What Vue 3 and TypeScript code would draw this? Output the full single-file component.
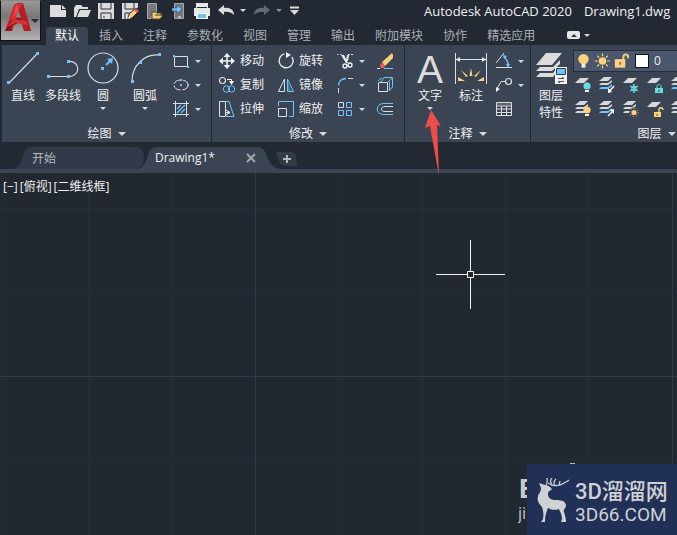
<script setup lang="ts">
interface Tool { id: string; label: string; caret?: boolean }

const para = (y: number, fill = '#d6d8db') => `<path d="M4 ${y + 5}L9 ${y}H18L13 ${y + 5}Z" fill="${fill}"/>`
const stack = (last = '#d6d8db') =>
  `<path d="M4 8L9 4H17L13 8Z" fill="#d6d8db"/><path d="M4 12L6 10H13L17 7V9L13 12Z" fill="#d6d8db"/><path d="M4 16L6 14H13L17 11V13L13 16Z" fill="${last}"/>`
const bulb = (color: string) => `<circle cx="16" cy="13" r="3.6" fill="${color}"/><path d="M14 17h4v2h-4z" fill="#eef0f2"/>`

const icons: Record<string, string> = {
  new: '<path d="M4 5H15V10H20V17H4Z" fill="#dcdcdc"/><path d="M16 5L20 9H16Z" fill="#dcdcdc"/>',
  open: '<path d="M4 17V8L6 5H11L13 7H18V9H9L6 17Z" fill="#dcdcdc"/><path d="M7 17L10 10H21L18 17Z" fill="#dcdcdc"/>',
  save: '<path d="M4 3H20V19H4Z" fill="#dcdcdc"/><path d="M7 3V9H17V3M7 19V13H17V19" fill="none" stroke="#29303a"/><path d="M10 16v2" stroke="#29303a"/>',
  saveas: '<path d="M4 3H20V7L10 19H4Z" fill="#dcdcdc"/><path d="M7 3V9H16V3M7 19V13H13" fill="none" stroke="#29303a"/><path d="M10 19L11 14L18 8L21 11L14 18Z" fill="#f8cc72" stroke="#252c36"/><path d="M18 8L21 11L19 13L16 10Z" fill="#e05454"/><path d="M10 19l1-3 2 2z" fill="#fff"/>',
  mobileOpen: '<path d="M5.500 3.500H14.500V18.500H5.500Z" fill="#777" stroke="#a8a8a8"/><path d="M9 17h3" stroke="#fff"/><path d="M10 19V12H14L15 13H19V15L21 15L18 19Z" fill="#f6ca70" stroke="#4b4639"/><path d="M13 15H20" stroke="#3e3a32"/>',
  mobileSave: '<path d="M8.500 3.500H17.500V18.500H8.500Z" fill="#777" stroke="#a8a8a8"/><path d="M12 17h3" stroke="#fff"/><path d="M6 8H11V5L16 9L11 14V11H6Z" fill="#6fc3ff" stroke="#28476a" stroke-width=".6"/>',
  print: '<path d="M7 3H17V7H7ZM4 8H20V16H17V13H7V16H4Z" fill="#e5e7e9"/><path d="M6 3H18V8H6Z" fill="#e5e7e9"/><path d="M7 7.500H17" stroke="#2b3139"/><path d="M6 13H18V19H6Z" fill="#f4f4f4"/><path d="M8 14H16V18H8Z" fill="#72c1f5"/>',
  undo: '<path d="M4 10L10 5V8C16 7 20 10 20 15C17 12 14 11.500 10 12V15Z" fill="#dcdcdc"/>',
  redo: '<path d="M20 10L14 5V8C8 7 4 10 4 15C7 12 10 11.500 14 12V15Z" fill="#656b74"/>',
  customise: '<path d="M8 7.500H17" stroke="#dcdcdc" stroke-width="2"/><path d="M8 10H17L12.500 15Z" fill="#dcdcdc"/>',
  line: '<path d="M2 31L30 2" stroke="#d9dce0" stroke-width="1.2"/><path d="M0 29h3v3H0zM29 0h3v3h-3z" fill="#6fc3ff"/>',
  polyline: '<path d="M2 24.500H21M21 9.500C34 8 34 25 21 24.500" stroke="#d9dce0" stroke-width="1.2" fill="none"/><path d="M0 23h3v3H0zM20 23h3v3h-3zM20 8h3v3h-3z" fill="#6fc3ff"/>',
  circle: '<circle cx="16" cy="16" r="15" stroke="#d9dce0" stroke-width="1.2" fill="none"/><path d="M14 15h3v3h-3z" fill="#6fc3ff"/><path d="M19 13L24 8" stroke="#6fc3ff" stroke-width="2"/><path d="M20 7L26 6L25 12Z" fill="#6fc3ff"/>',
  arc: '<path d="M3 29C3 14 15 2 29 3" stroke="#d9dce0" stroke-width="1.2" fill="none"/><path d="M2 28h3v3H2zM10 9h3v3h-3zM29 1h3v3h-3z" fill="#6fc3ff"/>',
  rect: '<path d="M5.500 7.500H18.500V17.500H5.500Z" stroke="#dcdfe2" fill="none"/><path d="M4 6h2v2H4zM18 17h2v2h-2z" fill="#6fc3ff"/>',
  ellipse: '<ellipse cx="12" cy="12" rx="7" ry="5" stroke="#dcdfe2" fill="none" stroke-dasharray="8 2"/><path d="M11 6h2v2h-2zM11 11h2v2h-2zM18 11h2v2h-2z" fill="#6fc3ff"/>',
  hatch: '<path d="M6.500 4V20M17.500 4V20M4 6.500H20M4 17.500H20" stroke="#dcdfe2"/><path d="M8 12L12 8M8 16L16 8M12 16L16 12" stroke="#6fc3ff" stroke-width="1.2"/>',
  move: '<path d="M6 12H18M12 6V18" stroke="#eef0f2" stroke-width="1.600"/><path d="M4 12L8 8.500V15.500ZM20 12L16 8.500V15.500ZM12 4L8.500 8H15.500ZM12 20L8.500 16H15.500Z" fill="#eef0f2"/>',
  rotate: '<path d="M16 6A7 7 0 1 1 8 6" stroke="#e3e5e8" stroke-width="1.400" fill="none" transform="rotate(22 12 12)"/><path d="M12 3V9L17 6Z" fill="#eef0f2"/>',
  trim: '<path d="M4 5.500H10" stroke="#6fc3ff" stroke-dasharray="2 1"/><path d="M15 5.500H20" stroke="#dcdfe2" stroke-dasharray="2 1"/><path d="M8 6L11 6L15 14L13 14ZM14 6H16L15 12H13Z" fill="#eef0f2"/><circle cx="12" cy="17" r="2" fill="none" stroke="#eef0f2" stroke-width="1.400"/><circle cx="17" cy="16" r="2" fill="none" stroke="#eef0f2" stroke-width="1.400"/>',
  erase: '<path d="M9 13L19 4L20 6V9L12 17Z" fill="#f8cf7b"/><path d="M9 13L12 17L11 19H8L7 17Z" fill="#ed5962"/><path d="M4 19.500H7" stroke="#eef0f2"/><path d="M11 19.500H20" stroke="#6fc3ff"/>',
  copy: '<circle cx="7.500" cy="7.500" r="3" stroke="#dcdfe2" stroke-width="1.200" fill="none"/><path d="M12 6.500H16.500V8" stroke="#fff" fill="none"/><path d="M14 8H19L16.500 12Z" fill="#fff"/><circle cx="11.500" cy="16" r="3.200" stroke="#6fc3ff" fill="none"/><circle cx="16.500" cy="16" r="3.200" stroke="#6fc3ff" fill="none"/>',
  mirror: '<path d="M10.500 6V18.500H4.500Z" stroke="#dcdfe2" fill="none"/><path d="M13.500 6V18.500H19.500Z" stroke="#6fc3ff" fill="none"/><path d="M14 9L17 18H14Z" fill="#4a7da5"/>',
  fillet: '<path d="M5.500 12.500C5.500 8 9 5.500 13 5.500" stroke="#6fc3ff" stroke-width="1.400" fill="none"/><path d="M15 5.500H20M5.500 15V20" stroke="#dcdfe2"/>',
  explode: '<path d="M6 9.500H14.500V18.500H5.500V9.500" stroke="#dcdfe2" fill="none"/><path d="M8 9L11 4.500H19.500V14L16 18M5 8L9 4.500M15 9L19 5M16.500 9V18" stroke="#6fc3ff" fill="none"/>',
  stretch: '<path d="M4.500 4.500H10.500V19.500H4.500ZM10 15.500H15" stroke="#dcdfe2" fill="none"/><path d="M11 13L15 15.500L11 18" stroke="#fff" fill="none"/><path d="M11 4.500H14L19 19.500H10" stroke="#6fc3ff" fill="none"/>',
  scale: '<path d="M4 11.500H12.500V19.500H4.500V11" stroke="#dcdfe2" fill="none"/><path d="M4.500 9V4.500H19.500V19.500H15" stroke="#6fc3ff" fill="none"/>',
  array: '<path d="M5.500 5.500h5v5h-5z" stroke="#dcdfe2" fill="none"/><path d="M13.500 5.500h5v5h-5zM5.500 13.500h5v5h-5zM13.500 13.500h5v5h-5z" stroke="#6fc3ff" fill="none"/>',
  offset: '<path d="M20 6.500H11C2 6.500 2 17.500 11 17.500H20" stroke="#6fc3ff" fill="none"/><path d="M20 9.500H12C7 9.500 7 14.500 12 14.500H20" stroke="#dcdfe2" fill="none"/>',
  dimension: '<path d="M.500 1V32M31.500 1V32M1 7.500H31" stroke="#dcdfe2"/><path d="M1 7.500L5 5V10ZM31 7.500L27 5V10Z" fill="#e8e9eb"/><path d="M14.500 24L16 16L17.500 24ZM11 25L6 18L13 24ZM21 25L26 18L19 24ZM10 29L3 25V29ZM22 29L29 25V29Z" fill="#f6d17e"/>',
  angular: '<path d="M4 14L12 4M4 18.500H20" stroke="#dcdfe2" fill="none"/><path d="M12 8C15 10 16 13 16.500 17" stroke="#6fc3ff" stroke-width="1.500" fill="none"/><path d="M14 15L18 15L16 19ZM11 6L15 7L12 10Z" fill="#6fc3ff"/>',
  leader: '<circle cx="16.500" cy="8.500" r="3" stroke="#dcdfe2" stroke-width="1.200" fill="none"/><path d="M13 8.500H9L5 16" stroke="#dcdfe2" fill="none"/><path d="M4 19V14L8 16Z" fill="#eef0f2"/>',
  table: '<path d="M4.500 5.500H19.500V18.500H4.500ZM4 9H20M4 12H20M4 15.500H20M9.500 9V18M14.500 9V18" stroke="#dcdfe2" fill="none"/><path d="M5 6H19V8H5Z" fill="#596371"/>',
  layers: '<path d="M1 13L11 1H27L17 13Z" fill="#dcdcdc"/><path d="M1 19L5 15H18L25 8V12L17 19ZM1 25L5 21H18L22 16V20L18 25Z" fill="#dcdcdc"/><path d="M20 15H32V32H20Z" fill="#f0f0f0"/><path d="M21.500 16.500H30.500V22.500H21.500Z" fill="#6fc3ff" stroke="#303a48"/><path d="M23 26.500H29M23 29.500H29M27 25l2 1.500M23 29.500l2 1.500" stroke="#555"/>',
  off: para(5) + bulb('#68dce0'),
  isolate: stack('#6fc3ff') + '<path d="M19 13L14 19" stroke="#fff" stroke-width="1.400"/><path d="M13 20V15L17 19Z" fill="#fff"/>',
  freeze: para(5) + '<path d="M15 11V20M11 13L19 18M19 13L11 18" stroke="#68dce0" stroke-width="1.400"/><circle cx="15" cy="15.500" r="2.500" fill="none" stroke="#68dce0"/>',
  lock: para(5) + '<path d="M14 15V13C14 11 18 11 18 13V15" stroke="#68dce0" fill="none"/><path d="M12 15h8v5h-8z" fill="#68dce0"/><path d="M15.500 17h1v2h-1z" fill="#255"/>',
  current: stack('#6fc3ff'),
  on: stack() + bulb('#fbd17b'),
  unisolate: stack('#6fc3ff') + '<path d="M13 19L18 14" stroke="#fff" stroke-width="1.400"/><path d="M19 12V17L15 13Z" fill="#fff"/>',
  thaw: stack() + '<circle cx="15" cy="15.500" r="5" fill="#3b4453"/><circle cx="15" cy="15.500" r="2.600" fill="#fbd17b"/><circle cx="15" cy="15.500" r="4.200" fill="none" stroke="#fbd17b" stroke-dasharray="1 2.300"/>',
  unlock: para(5) + '<path d="M16 15V13C16 10 20 10 20 13" stroke="#fbd17b" stroke-width="1.400" fill="none"/><path d="M11 15h7v5h-7z" fill="#fbd17b"/><path d="M13.500 17h1v2h-1z" fill="#543"/>',
  match: stack(),
  bulb: '<circle cx="10" cy="8" r="5.500" fill="#fbd17b"/><path d="M8 13h4v4H8z" fill="#f4f0e6"/>',
  sun: '<circle cx="10" cy="10" r="4" fill="#fbd17b"/><path d="M10 2V5M10 15V18M2 10H5M15 10H18M4.500 4.500l2 2M13.500 13.500l2 2M4.500 15.500l2-2M13.500 6.500l2-2" stroke="#fbd17b" stroke-width="1.300"/>',
  padlock: '<path d="M12 9V6C12 2 17 2 17 6V7" stroke="#fbd17b" stroke-width="2" fill="none"/><path d="M3 8h11v9H3z" fill="#fbd17b"/><path d="M8 11h1v3H8z" fill="#3b3a36"/>',
}

const quick: Tool[] = [
  { id: 'new', label: '新建' }, { id: 'open', label: '打开' }, { id: 'save', label: '保存' },
  { id: 'saveas', label: '另存为' }, { id: 'mobileOpen', label: '从移动设备打开' },
  { id: 'mobileSave', label: '保存到移动设备' }, { id: 'print', label: '打印' },
  { id: 'undo', label: '放弃', caret: true }, { id: 'redo', label: '重做', caret: true },
  { id: 'customise', label: '自定义' },
]
const ribbonTabs = ['默认', '插入', '注释', '参数化', '视图', '管理', '输出', '附加模块', '协作', '精选应用']
const drawLarge: Tool[] = [
  { id: 'line', label: '直线' }, { id: 'polyline', label: '多段线' },
  { id: 'circle', label: '圆', caret: true }, { id: 'arc', label: '圆弧', caret: true },
]
const drawSmall: Tool[] = [
  { id: 'rect', label: '矩形' }, { id: 'ellipse', label: '椭圆' }, { id: 'hatch', label: '图案填充' },
]
const modify: Tool[] = [
  { id: 'move', label: '移动' }, { id: 'rotate', label: '旋转' },
  { id: 'copy', label: '复制' }, { id: 'mirror', label: '镜像' },
  { id: 'stretch', label: '拉伸' }, { id: 'scale', label: '缩放' },
]
const modifySmall: Tool[] = [
  { id: 'trim', label: '修剪', caret: true }, { id: 'erase', label: '删除' },
  { id: 'fillet', label: '圆角', caret: true }, { id: 'explode', label: '分解' },
  { id: 'array', label: '阵列', caret: true }, { id: 'offset', label: '偏移' },
]
const annotateSmall: Tool[] = [
  { id: 'angular', label: '角度', caret: true }, { id: 'leader', label: '引线', caret: true }, { id: 'table', label: '表格' },
]
const layerTools = ['off', 'isolate', 'freeze', 'lock', 'current', 'on', 'unisolate', 'thaw', 'unlock', 'match']
const gridLines = Array.from({ length: 32 }, (_, i) => i)
const gridX = (i: number) => Math.round(5 + (i * 250) / 3)
const gridY = (i: number) => Math.round(36 + (i * 250) / 3)
</script>

<template>
  <main class="app">
    <header class="head">
      <button class="logo" aria-label="应用程序菜单">
        <svg width="28" height="30" viewBox="0 0 28 30">
          <path d="M0 28L9 2L12 0H18L26 28H19L14 9L7 28Z" fill="#c9252b" />
          <path d="M11 1H18L14 9L7 28H0Z" fill="#d93034" />
          <path d="M18 1L26 28H19L13 7Z" fill="#b51e25" />
          <path d="M0 28L5 18L14 14L20 20L13 20L7 23L7 28Z" fill="#8f151c" />
          <path d="M2 24L9 16L21 18L23 22L10 20Z" fill="#d7343a" />
          <path d="M13 7L11 14L16 15Z" fill="#8c8587" />
          <path d="M11 1L14 6L9 15Z" fill="#e8494a" />
        </svg>
        <i class="caret dark"></i>
      </button>
      <div class="head-main">
        <div class="quick-row">
          <div class="quick">
            <template v-for="t in quick" :key="t.id">
              <button :class="['bare', 'quick-btn', t.id]" :aria-label="t.label">
                <svg width="24" height="23" viewBox="0 0 24 23" v-html="icons[t.id]"></svg>
              </button>
              <button v-if="t.caret" class="bare quick-caret" :aria-label="t.label + '列表'"><i class="caret"></i></button>
            </template>
          </div>
          <h1 class="title"><span>Autodesk AutoCAD 2020</span><span>Drawing1.dwg</span></h1>
        </div>
        <nav class="tabs">
          <button v-for="(t, i) in ribbonTabs" :key="t" :class="['bare', 'tab', { active: i === 0 }]">{{ t }}</button>
          <button class="bare collapse" aria-label="最小化功能区"><span class="pill"><i></i></span><i class="caret"></i></button>
        </nav>
      </div>
    </header>

    <section class="ribbon">
      <div class="panel draw">
        <div class="body">
          <button v-for="t in drawLarge" :key="t.id" :class="['bare', 'large', t.id]">
            <svg width="32" height="32" viewBox="0 0 32 32" v-html="icons[t.id]"></svg>
            <span>{{ t.label }}</span>
            <i v-if="t.caret" class="caret"></i>
          </button>
          <div class="column">
            <button v-for="t in drawSmall" :key="t.id" class="bare small wide" :aria-label="t.label">
              <svg width="24" height="24" viewBox="0 0 24 24" v-html="icons[t.id]"></svg><i class="caret"></i>
            </button>
          </div>
        </div>
        <button class="bare panel-title">绘图<i class="caret big"></i></button>
      </div>

      <div class="panel modify">
        <div class="body">
          <div class="pairs">
            <button v-for="t in modify" :key="t.id" class="bare small">
              <svg width="24" height="24" viewBox="0 0 24 24" v-html="icons[t.id]"></svg><span>{{ t.label }}</span>
            </button>
          </div>
          <div class="singles">
            <button v-for="t in modifySmall" :key="t.id" class="bare small" :aria-label="t.label">
              <svg width="24" height="24" viewBox="0 0 24 24" v-html="icons[t.id]"></svg><i v-if="t.caret" class="caret"></i>
            </button>
          </div>
        </div>
        <button class="bare panel-title">修改<i class="caret big"></i></button>
      </div>

      <div class="panel annotate">
        <div class="body">
          <button class="bare large">
            <b class="letter">A</b><span>文字</span><i class="caret"></i>
          </button>
          <button class="bare large dim">
            <svg width="32" height="32" viewBox="0 0 32 32" v-html="icons.dimension"></svg><span>标注</span>
          </button>
          <div class="column">
            <button v-for="t in annotateSmall" :key="t.id" class="bare small" :aria-label="t.label">
              <svg width="24" height="24" viewBox="0 0 24 24" v-html="icons[t.id]"></svg><i v-if="t.caret" class="caret"></i>
            </button>
          </div>
        </div>
        <button class="bare panel-title">注释<i class="caret big"></i></button>
      </div>

      <div class="panel layer">
        <div class="body">
          <button class="bare large">
            <svg width="32" height="32" viewBox="0 0 32 32" v-html="icons.layers"></svg>
            <span>图层</span><span>特性</span>
          </button>
          <div class="layer-side">
            <div class="combo">
              <svg v-for="id in ['bulb', 'sun', 'padlock']" :key="id" width="19" height="20" viewBox="0 0 20 20" v-html="icons[id]"></svg>
              <i class="swatch"></i>
              <select aria-label="图层"><option>0</option></select>
            </div>
            <div class="layer-grid">
              <button v-for="id in layerTools" :key="id" class="bare small" :aria-label="id">
                <svg width="24" height="24" viewBox="0 0 24 24" v-html="icons[id]"></svg>
              </button>
            </div>
          </div>
        </div>
        <button class="bare panel-title">图层<i class="caret big"></i></button>
      </div>
    </section>

    <nav class="files">
      <button class="bare file start">
        <svg width="136" height="22" viewBox="0 0 136 22"><path d="M0 22C8 21 9 15 11 9C12 3 15 0 20 0H122C129 0 132 4 132 10C132 16 130 21 124 22Z" fill="#313a48" /></svg>
        <span>开始</span>
      </button>
      <div class="file current">
        <svg width="144" height="22" viewBox="0 0 144 22"><path d="M0 22C6 20 8 14 10 8C11 3 14 0 20 0H118C124 0 127 3 129 9C131 16 135 21 143 22Z" fill="#3b4453" /></svg>
        <button class="bare file-name">Drawing1*</button>
        <button class="bare close" aria-label="关闭"><svg width="10" height="10" viewBox="0 0 10 10"><path d="M1 1L9 9M9 1L1 9" stroke="#a2a7ae" stroke-width="2" /></svg></button>
      </div>
      <button class="bare add" aria-label="新图形">
        <svg width="22" height="14" viewBox="0 0 22 14"><path d="M0 0H15C19 0 21 3 21 14H10C4 14 2 8 0 0Z" fill="#323b48" /><path d="M7 7H15M11 3V11" stroke="#b2b5ba" stroke-width="2" /></svg>
      </button>
    </nav>

    <section class="canvas">
      <svg class="grid" width="100%" height="100%">
        <g shape-rendering="crispEdges">
          <rect v-for="i in gridLines" :key="'x' + i" :x="gridX(i)" y="0" width="1" height="100%" :class="{ major: i % 5 === 3 }" />
          <rect v-for="i in gridLines" :key="'y' + i" x="0" :y="gridY(i)" width="100%" height="1" :class="{ major: i % 5 === 2 }" />
        </g>
      </svg>
      <div class="view"><button class="bare">[−]</button><button class="bare">[俯视]</button><button class="bare">[二维线框]</button></div>
      <svg class="cross" width="69" height="69" viewBox="0 0 69 69">
        <path d="M34.500 0V31M34.500 38V69M0 34.500H31M38 34.500H69" stroke="#f2f2f2" />
        <path d="M31.500 31.500H37.500V37.500H31.500Z" fill="none" stroke="#fff" />
      </svg>
      <div class="mark">
        <div class="under"><b>B</b><span>ji</span></div>
        <div class="brand">
          <i class="paw"></i>
          <svg width="36" height="46" viewBox="0 0 36 46" fill="#d0d1d4">
            <path d="M2 5L8 7C11 7 13 9 15 11C13 13 11 13 11 16C11 20 14 22 19 22C26 22 29 24 29 28C28 31 26 32 27 34C28 37 29 41 29 44H24L25 41C25 36 23 34 22 31C17 33 13 31 11 30C9 35 8 38 8 44H4L6 41C7 36 6 33 5 29C1 25 0 22 1 18C2 15 4 14 4 10Z" />
            <path d="M9 7C11 4 10 3 10 0M11 5C16 9 23 8 27 5C29 4 31 3 32 2M15 6C13 4 13 2 15 0M18 7C16 5 17 3 19 1M22 7L23 3" fill="none" stroke="#d0d1d4" stroke-width="1.200" />
          </svg>
          <div class="brand-text"><strong>3D溜溜网</strong><span>3D66.COM</span></div>
        </div>
      </div>
    </section>

    <svg class="pointer" width="17" height="66" viewBox="0 0 17 66"><path d="M6 0L16 16L12 15L14 66L5 16L0 18Z" fill="#ef4b4b" /></svg>
  </main>
</template>

<style>
body { margin: 0; background: #212830; }
</style>

<style scoped>
.app { position: relative; display: flex; flex-direction: column; min-height: 100vh; overflow: hidden; background: #222933; color: #eef0f2; font: 12px/16px "Open Sans", "Noto Sans CJK SC", sans-serif; }
.app * { box-sizing: border-box; }
svg { display: block; flex: none; }
.bare { margin: 0; padding: 0; border: 0; background: none; color: inherit; font: inherit; white-space: nowrap; }
.caret { flex: none; width: 0; height: 0; border: 3px solid transparent; border-top: 3px solid #d5d7da; border-bottom: 0; }
.caret.big { border-width: 4px 4px 0; }
.caret.dark { border-width: 4px 4px 0; border-top-color: #252b34; }

.head { display: flex; height: 45px; }
.logo { flex: none; display: flex; align-items: center; width: 41px; height: 41px; padding: 0 0 6px 4px; border: 1px solid #111; border-top-color: #888; background: linear-gradient(#999, #777 40%, #b4b4b4); }
.logo .caret { margin: 6px 0 0 -2px; }
.head-main { flex: 1; min-width: 0; padding-left: 5px; }
.quick-row { display: flex; height: 27px; }
.quick { display: flex; height: 23px; width: 378px; }
.quick-caret { display: flex; align-items: center; justify-content: center; width: 10px; height: 21px; }
.redo { margin-left: 2px; }
.redo + .quick-caret { opacity: .6; }
.customise { width: 20px; }
.customise svg { margin-left: -2px; }
.title { display: flex; gap: 12px; margin: 0; font: 13px/23px "Open Sans", sans-serif; white-space: nowrap; }
.tabs { display: flex; gap: 2px; height: 18px; }
.tab { padding: 0 9px; color: #a9aeb6; line-height: 18px; }
.tab.active { border-radius: 3px 3px 0 0; background: #3b4453; color: #fff; }
.collapse { display: flex; align-items: center; gap: 4px; height: 16px; padding-left: 21px; }
.pill { display: flex; align-items: center; justify-content: center; width: 13px; height: 8px; border-radius: 2px; background: #e4e6e8; }
.pill i { border: 3px solid transparent; border-top: 0; border-bottom-color: #303741; }

.ribbon { display: flex; gap: 1px; padding-left: 2px; overflow: hidden; }
.panel { flex: none; display: flex; flex-direction: column; height: 97px; padding-top: 4px; background: #3b4453; }
.body { display: flex; align-items: flex-start; height: 75px; }
.panel-title { display: flex; align-items: center; justify-content: center; gap: 6px; height: 18px; padding-top: 1px; }
.draw { width: 209px; }
.modify { width: 192px; }
.annotate { width: 125px; }
.layer { width: 251px; }
.draw .body { padding-left: 1px; }
.modify .body { padding-left: 3px; }
.annotate .body { padding-left: 5px; }
.large { display: flex; flex-direction: column; align-items: center; width: 40px; height: 72px; padding-top: 3px; }
.large svg { margin-bottom: 3px; }
.large span { line-height: 17px; }
.large .caret { margin-top: 3px; }
.large.arc { width: 44px; }
.large.dim { width: 42px; }
.letter { height: 35px; color: #dcdcdc; font: 39px/35px "Liberation Sans", sans-serif; }
.column { display: flex; flex-direction: column; }
.small { display: flex; align-items: center; height: 24px; gap: 1px; }
.small.wide { padding-left: 2px; }
.small .caret { margin-left: 1px; }
.pairs { display: grid; grid-template-columns: 59px 59px; width: 118px; }
.singles { display: grid; grid-template-columns: 40px 24px; }
.layer-side { flex: 1; }
.combo { display: flex; align-items: center; height: 22px; margin: 1px 0 1px 2px; border: 1px solid #252d38; background: #4b576c; }
.swatch { width: 14px; height: 14px; margin: 0 5px 0 4px; border: 1px solid #101318; background: #fff; }
.combo select { flex: 1; height: 18px; padding: 0; border: 0; background: transparent; color: #eef0f2; font: inherit; appearance: none; }
.layer-grid { display: grid; grid-template-columns: repeat(5, 24px); }

.files { display: flex; align-items: flex-end; height: 31px; padding: 0 0 4px 12px; background: linear-gradient(#222933 27px, #3b4453 27px); }
.file { position: relative; display: flex; align-items: center; height: 22px; }
.file > svg { position: absolute; left: 0; top: 0; }
.file > span, .file > button { position: relative; }
.start { width: 126px; padding: 2px 0 0 20px; color: #b4b8be; }
.current { width: 138px; padding-left: 17px; gap: 31px; }
.file-name { line-height: 22px; }
.add { margin-bottom: 3px; }

.canvas { position: relative; flex: 1; min-height: 362px; overflow: hidden; background: #212830; }
.grid { position: absolute; inset: 0; fill: #262e38; }
.major { fill: #303849; }
.view { position: relative; display: flex; gap: 2px; padding: 6px 3px; }
.cross { position: absolute; left: 436px; top: 67px; }
.mark { position: absolute; right: 0; bottom: 0; display: flex; align-items: flex-end; color: #d0d1d4; }
.under { display: flex; flex-direction: column; width: 9px; height: 60px; overflow: hidden; color: #c6c8ca; }
.under b { padding-left: 1px; font: bold 28px/28px "Liberation Sans", sans-serif; }
.under span { font: 16px/20px "Open Sans", sans-serif; }
.brand { position: relative; display: flex; gap: 2px; width: 150px; height: 71px; padding: 14px 0 0 10px; background: #213056; }
.paw { position: absolute; left: 43px; top: -1px; width: 5px; height: 1px; background: #b9bbbe; }
.brand-text { display: flex; flex-direction: column; padding-top: 1px; white-space: nowrap; }
.brand strong { font: 500 22px/26px Roboto, "Noto Sans CJK SC", sans-serif; }
.brand span { font: 19px/20px Roboto, sans-serif; }
.pointer { position: absolute; left: 425px; top: 110px; }
</style>
